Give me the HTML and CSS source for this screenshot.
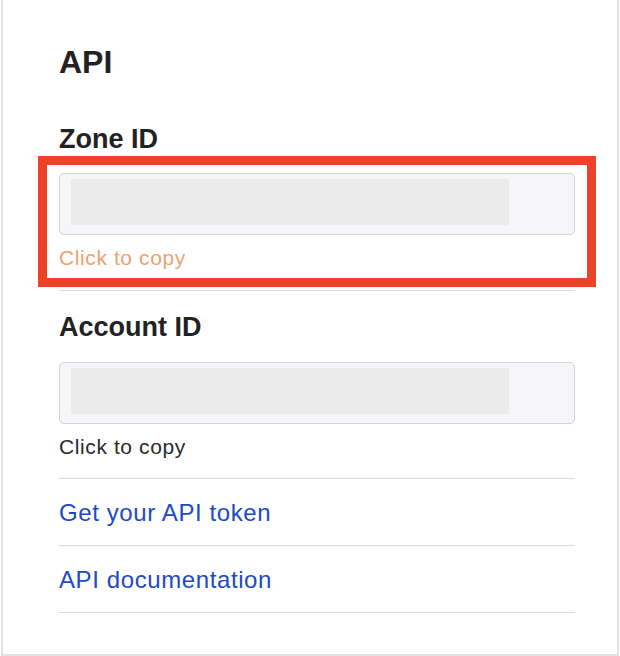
FILE: index.html
```html
<!DOCTYPE html>
<html lang="en">
<head>
    <meta charset="UTF-8">
    <meta name="viewport" content="width=device-width, initial-scale=1.0">
    <title>API</title>
    <link rel="stylesheet" href="styles.css">
</head>
<body>
    <div class="card">
        <h2 class="card-title">API</h2>

        <section class="field field-zone">
            <h3 class="field-label">Zone ID</h3>
            <div class="highlight">
                <div class="id-box"><span class="id-blur"></span></div>
                <p class="copy-hint copy-hint-active">Click to copy</p>
            </div>
        </section>

        <section class="field">
            <h3 class="field-label">Account ID</h3>
            <div class="id-box"><span class="id-blur"></span></div>
            <p class="copy-hint">Click to copy</p>
        </section>

        <ul class="links">
            <li><a href="#">Get your API token</a></li>
            <li><a href="#">API documentation</a></li>
        </ul>
    </div>
</body>
</html>
```

FILE: styles.css
```css
:root {
    --text-color: #222222;
    --line-color: #dcdcdc;
    --link-color: #2049c8;
    --hint-active: #eea26f;
    --mark-color: #ec4227;
}

body {
    font-family: 'Liberation Sans', Arial, sans-serif;
    margin: 0;
    padding: 0;
    background: #ffffff;
    color: var(--text-color);
}

.card {
    margin: 0 1px;
    height: 656px;
    box-sizing: border-box;
    padding: 42px 42px 0 56px;
    border: 2px solid #e2e2e2;
    border-top: none;
}

.card-title {
    font-size: 32px;
    line-height: 40px;
    font-weight: 700;
    margin: 0;
}

/* Zone / account blocks */
.field {
    border-bottom: 1px solid var(--line-color);
    padding-bottom: 18px;
}

.field-zone {
    margin-top: 41px;
    padding-bottom: 3px;
}

.field-zone + .field {
    margin-top: 20px;
}

.field-label {
    font-size: 27px;
    line-height: 32px;
    font-weight: 700;
    margin: 0 0 19px;
}

.field-zone .field-label {
    margin-bottom: 1px;
}

/* Red annotation frame round the zone id */
.highlight {
    margin: 0 -21px;
    padding: 8px 12px 7px;
    border: 9px solid var(--mark-color);
}

.id-box {
    height: 62px;
    box-sizing: border-box;
    padding: 5px 11px;
    background: #f6f6f8;
    border: 1px solid #d3d3d7;
    border-radius: 5px;
}

.id-blur {
    display: block;
    width: 438px;
    height: 46px;
    background: #ebebeb;
}

.copy-hint {
    font-size: 21px;
    line-height: 26px;
    letter-spacing: 0.6px;
    margin: 10px 0 0;
    color: #2a2a2a;
}

.copy-hint-active {
    color: var(--hint-active);
}

/* Link list */
.links {
    list-style: none;
    margin: 0;
    padding: 0;
}

.links li {
    padding: 19px 0 17px;
    border-bottom: 1px solid var(--line-color);
}

.links a {
    display: block;
    font-size: 24px;
    line-height: 30px;
    letter-spacing: 0.6px;
    color: var(--link-color);
    text-decoration: none;
}
```
